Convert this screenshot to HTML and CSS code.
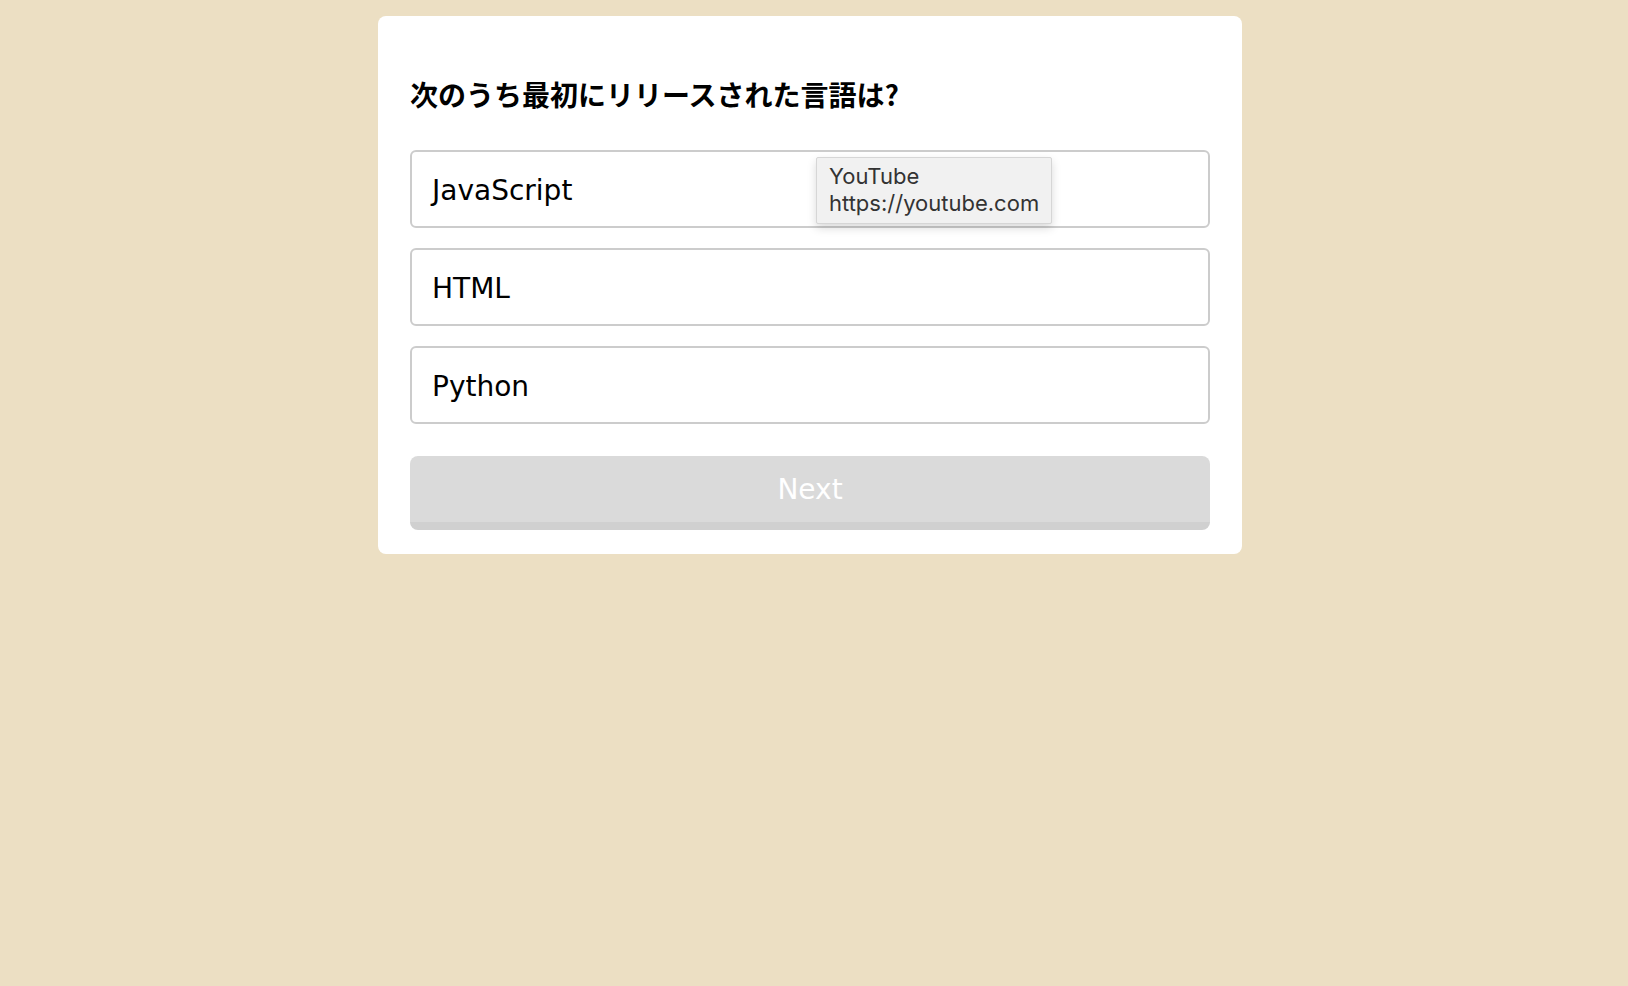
FILE: index.html
```html
<!DOCTYPE html>
<html lang="ja">
<head>
<meta charset="utf-8">
<title>Quiz</title>
<link rel="stylesheet" href="styles.css">
</head>
<body>
<main class="card">
  <h2 class="question">次のうち最初にリリースされた言語は?</h2>
  <div class="options">
    <div class="option">
      JavaScript
      <div class="tooltip">
        <div>YouTube</div>
        <div>https://youtube.com</div>
      </div>
    </div>
    <div class="option">HTML</div>
    <div class="option">Python</div>
  </div>
  <button class="next" type="button">Next</button>
</main>
</body>
</html>
```
FILE: styles.css
```css
html, body {
  margin: 0;
  padding: 0;
}
body {
  background: #ecdfc3;
  min-height: 986px;
  padding-right: 8px;
  font-family: "DejaVu Sans", Verdana, sans-serif;
}
.card {
  width: 864px;
  box-sizing: border-box;
  margin: 16px auto 0;
  background: #ffffff;
  border-radius: 8px;
  padding: 58px 32px 24px;
}
.question {
  margin: 0 0 36px;
  font-family: "Noto Sans CJK JP", "DejaVu Sans", sans-serif;
  font-size: 28px;
  line-height: 40px;
  font-weight: 700;
  color: #000;
}
.options {
  display: flex;
  flex-direction: column;
  gap: 20px;
}
.option {
  position: relative;
  height: 78px;
  box-sizing: border-box;
  border: 2px solid #cccccc;
  border-radius: 6px;
  padding: 2px 20px 0;
  display: flex;
  align-items: center;
  font-size: 28px;
  color: #000;
}
.tooltip {
  position: absolute;
  left: 404px;
  top: 5px;
  width: 236px;
  height: 67px;
  box-sizing: border-box;
  background: #f1f1f1;
  border: 1px solid #d6d6d6;
  border-radius: 2px;
  box-shadow: 0 4px 10px rgba(0, 0, 0, 0.15);
  padding: 5px 12px 0;
  font-family: "Inter", "Liberation Sans", sans-serif;
  font-size: 22px;
  line-height: 27px;
  color: #333333;
}
.next {
  display: block;
  width: 100%;
  margin-top: 32px;
  height: 74px;
  box-sizing: border-box;
  border: none;
  border-bottom: 8px solid #d0d0d0;
  border-radius: 8px;
  background: #dadada;
  color: #ffffff;
  font-family: "DejaVu Sans", Verdana, sans-serif;
  font-size: 28px;
  padding: 0;
}
```
